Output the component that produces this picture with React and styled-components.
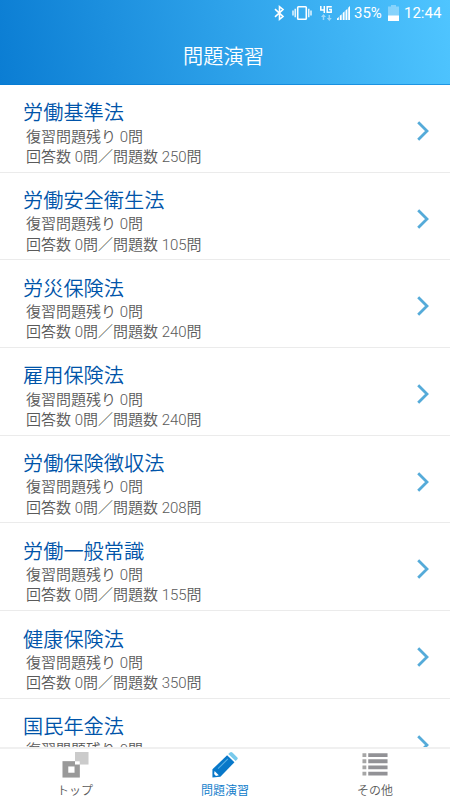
import React from 'react';
import styled, { createGlobalStyle } from 'styled-components';

const GlobalStyle = createGlobalStyle`
  * { box-sizing: border-box; }
  body { margin: 0; background: #fff; }
`;

const Screen = styled.div`
  display: flex;
  flex-direction: column;
  width: 450px;
  height: 800px;
  overflow: hidden;
  background: #fff;
  font-family: Roboto, "Noto Sans CJK JP", sans-serif;
`;

const Header = styled.header`
  flex: none;
  height: 85px;
  background: linear-gradient(79deg, #0b7dd3 0%, #4fc5ff 100%);
  border-bottom: 1px solid rgba(0, 120, 210, 0.6);
  color: #fff;
`;

const StatusBar = styled.div`
  display: flex;
  align-items: center;
  justify-content: flex-end;
  height: 26px;
  padding-right: 9px;
`;

const StatusIcon = styled.svg`
  display: block;
  flex: none;
  margin-right: ${(p) => p.$gap}px;
`;

const StatusText = styled.span`
  width: ${(p) => p.$width}px;
  margin-right: ${(p) => p.$gap || 0}px;
  font-size: 15px;
  font-weight: 450;
  line-height: 27px;
  white-space: nowrap;
`;

const HeaderTitle = styled.h1`
  margin: 0;
  height: 58px;
  padding-right: 3px;
  font-size: 20.2px;
  font-weight: 350;
  line-height: 62px;
  text-align: center;
`;

const List = styled.main`
  flex: 1;
  min-height: 0;
  overflow: hidden;
`;

const Row = styled.div`
  display: flex;
  align-items: flex-start;
  justify-content: space-between;
  height: 87.7px;
  padding: 16.4px 21px 0 23px;
  border-bottom: 1px solid #ebebeb;
`;

const RowTitle = styled.div`
  color: #0054a9;
  font-size: 20.2px;
  font-weight: 350;
  line-height: 24px;
  margin-bottom: 1.2px;
`;

const RowDetail = styled.div`
  padding-left: 3px;
  color: #5a5a5a;
  font-size: 15px;
  font-weight: 350;
  line-height: 20.4px;
  white-space: nowrap;
`;

const Chevron = styled.svg`
  display: block;
  flex: none;
  margin-top: 19.6px;
`;

const TabBar = styled.nav`
  flex: none;
  display: flex;
  height: 53px;
  border-top: 2px solid #f0f0f0;
  background: #fff;
`;

const Tab = styled.div`
  flex: 1;
  display: flex;
  flex-direction: column;
  align-items: center;
  padding-top: 3px;
  color: ${(p) => (p.$active ? '#0878c9' : '#5a5a5a')};
  font-size: 12px;
  font-weight: 350;
  line-height: 18px;
`;

const TabIcon = styled.svg`
  display: block;
  margin-bottom: 3px;
`;

const subjects = [
  ['労働基準法', 250],
  ['労働安全衛生法', 105],
  ['労災保険法', 240],
  ['雇用保険法', 240],
  ['労働保険徴収法', 208],
  ['労働一般常識', 155],
  ['健康保険法', 350],
  ['国民年金法', null],
];

const StatusIcons = () => (
  <>
    <StatusIcon width="11" height="16" viewBox="0 0 11 16" $gap={7} fill="none" stroke="#fff" strokeWidth="1.6">
      <path d="M1 4.2 9 11.5 5.5 14.3V1.7L9 4.5 1 11.8" />
    </StatusIcon>
    <StatusIcon width="20" height="14" viewBox="0 0 20 14" $gap={8} fill="none" stroke="#fff">
      <rect x="5.7" y="0.8" width="8.6" height="12.4" rx="0.8" strokeWidth="1.6" />
      <path d="M3.2 2.8v8.4M16.8 2.8v8.4M1 4.5v5M19 4.5v5" strokeWidth="1.3" />
    </StatusIcon>
    <StatusIcon width="12" height="15" viewBox="0 0 12 15" $gap={5} fill="none" stroke="#fff" strokeWidth="1.5">
      <path d="M.8 0v4.1h4M4.3 0v7M11.8.8H7.2v5.4h4V3.6H9" />
      <g opacity=".5">
        <path d="M3.5 14V10M9.3 9v4" strokeWidth="1.5" />
        <path d="M1 11l2.5-3L6 11zM6.8 12l2.5 3 2.5-3z" fill="#fff" stroke="none" />
      </g>
    </StatusIcon>
    <StatusIcon width="13" height="14" viewBox="0 0 13 14" $gap={4} fill="#fff">
      <path d="M0 14v-1.6L1.8 11v3zM2.8 14V9.8l1.9-1.6V14zM5.7 14V7l1.9-1.7V14zM8.5 14V4.4l1.9-1.7V14zM11.2 14V1.7L13 0v14z" />
    </StatusIcon>
  </>
);

const BatteryIcon = () => (
  <StatusIcon width="11" height="16" viewBox="0 0 11 16" $gap={5} fill="#fff">
    <path d="M3 0h5v1.5h3V11H0V1.5h3z" opacity=".35" />
    <path d="M0 10.5h11V16H0z" />
  </StatusIcon>
);

const TopIcon = () => (
  <TabIcon width="27" height="28" viewBox="0 0 27 28">
    <path d="M13 0h14v13H13z" fill="#cbcbcb" />
    <path d="M0 9.5h18v17H0z" fill="#999" />
    <path d="M13 9.5h5V13h-5z" fill="#fff" />
    <path d="M6 15h6.5v6.5H6z" fill="#fff" />
  </TabIcon>
);

const PencilIcon = () => (
  <TabIcon width="28" height="28" viewBox="0 0 28 28">
    <path d="M1 26.5V18L16.2 3.3 23.8 10.5 9.2 25.6z" fill="#0878c9" />
    <path d="m17.4 2.2 1.7-1.6q1.2-1 2.5 0l5 4.8q1.2 1.2 0 2.5L25 9.4z" fill="#78caec" />
    <path d="m6.8 17.2 10.2-10" stroke="#58b0e5" strokeWidth="1.1" />
    <path d="m3.2 19.8 4.4 4.4-3 .6-1.9-1.9z" fill="#fff" />
  </TabIcon>
);

const ListIcon = () => (
  <TabIcon width="26" height="28" viewBox="0 0 26 28">
    <path d="M0 1.3h4v4H0zM0 7.6h4v4H0zM0 14h4v4H0zM0 20.4h4v4H0z" fill="#a6a6a6" />
    <path d="M6 1.3h20v4H6zM6 7.6h20v4H6zM6 14h20v4H6zM6 20.4h20v4H6z" fill="#929296" />
  </TabIcon>
);

export default function App() {
  return (
    <Screen>
      <GlobalStyle />
      <Header>
        <StatusBar>
          <StatusIcons />
          <StatusText $width={28} $gap={6}>35%</StatusText>
          <BatteryIcon />
          <StatusText $width={37}>12:44</StatusText>
        </StatusBar>
        <HeaderTitle>問題演習</HeaderTitle>
      </Header>
      <List>
        {subjects.map(([name, total]) => (
          <Row key={name}>
            <div>
              <RowTitle>{name}</RowTitle>
              <RowDetail>復習問題残り 0問</RowDetail>
              {total !== null && <RowDetail>回答数 0問／問題数 {total}問</RowDetail>}
            </div>
            <Chevron width="12" height="20" viewBox="0 0 12 20" fill="none" stroke="#55abd9" strokeWidth="2.8">
              <path d="m1.2 1.2 8.8 8.8-8.8 8.8" />
            </Chevron>
          </Row>
        ))}
      </List>
      <TabBar>
        <Tab><TopIcon />トップ</Tab>
        <Tab $active><PencilIcon />問題演習</Tab>
        <Tab><ListIcon />その他</Tab>
      </TabBar>
    </Screen>
  );
}
